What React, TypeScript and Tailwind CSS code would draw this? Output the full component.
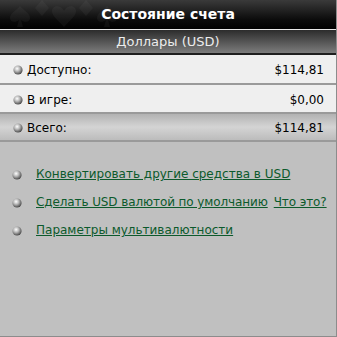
import React from 'react';

const Ball: React.FC<{ className?: string }> = ({ className = '' }) => (
  <svg width="10" height="10" viewBox="0 0 10 10" className={`shrink-0 ${className}`}>
    <defs>
      <radialGradient id="ballg" cx="40%" cy="35%" r="65%">
        <stop offset="0%" stopColor="#ffffff" />
        <stop offset="45%" stopColor="#b8b8b8" />
        <stop offset="100%" stopColor="#4a4a4a" />
      </radialGradient>
    </defs>
    <circle cx="5" cy="5" r="4.6" fill="url(#ballg)" />
  </svg>
);

// faint card-suit texture at the left of the title bar
const Suits: React.FC = () => (
  <svg width="140" height="29" viewBox="0 0 140 29" className="absolute left-0 top-0 opacity-[0.07]">
    <g fill="#9a9a9a">
      <path d="M20 6 C24 11 30 13 30 18 C30 22 25 23 21 20 L23 27 L17 27 L19 20 C15 23 10 22 10 18 C10 13 16 11 20 6Z" />
      <path d="M64 27 C58 20 52 16 52 11 C52 7 57 5 60 7 C62 8 63 9 64 11 C65 9 66 8 68 7 C71 5 76 7 76 11 C76 16 70 20 64 27Z" />
      <path d="M107 6 C111 11 117 13 117 18 C117 22 112 23 108 20 L110 27 L104 27 L106 20 C102 23 97 22 97 18 C97 13 103 11 107 6Z" />
      <path d="M42 0 L49 8 L42 16 L35 8Z" />
      <path d="M86 0 L93 8 L86 16 L79 8Z" />
    </g>
  </svg>
);

const rows = [
  { label: 'Доступно:', value: '$114,81', bg: 'bg-[#efefef]', h: 'h-[30px]' },
  { label: 'В игре:', value: '$0,00', bg: 'bg-[#efefef]', h: 'h-[29px]' },
  { label: 'Всего:', value: '$114,81', bg: 'bg-[linear-gradient(#b2b2b2,#d4d4d4_50%,#bcbcbc)]', h: 'h-[28px]' },
];

const App: React.FC = () => {
  return (
    <div className="w-[337px] h-[337px] bg-[#c0c0c0] border-r border-b border-[#8c8c8c] flex flex-col font-['DejaVu_Sans',sans-serif] text-[12px]">
      <div className="relative h-[30px] shrink-0 bg-[linear-gradient(#3a3a3a,#0a0a0a_70%,#000)] flex items-center justify-center border-b border-[#e8e8e8]">
        <Suits />
        <span className="relative text-white font-bold text-[14px]">Состояние счета</span>
      </div>
      <div className="h-[25px] shrink-0 bg-[linear-gradient(#2c2c2c,#7c7c7c)] flex items-center justify-center border-b-2 border-[#1e1e1e]">
        <span className="text-[#ececec] text-[13px]">Доллары (USD)</span>
      </div>
      {rows.map((r) => (
        <div key={r.label} className={`${r.h} ${r.bg} shrink-0 flex items-center pl-[13px] pr-[12px] pt-[2px] border-b-2 border-[#9a9a9a] text-black`}>
          <Ball className="mr-[4px]" />
          <span>{r.label}</span>
          <span className="ml-auto">{r.value}</span>
        </div>
      ))}
      <div className="flex flex-col gap-[13px] pt-[25px] pl-[12px] leading-[15px]">
        <div className="flex items-center">
          <Ball className="mr-[14px]" />
          <a href="#" className="text-[#0c5a2c] underline">Конвертировать другие средства в USD</a>
        </div>
        <div className="flex items-center">
          <Ball className="mr-[14px]" />
          <a href="#" className="text-[#0c5a2c] underline tracking-[-0.1px]">Сделать USD валютой по умолчанию</a>
          <a href="#" className="text-[#0c5a2c] underline ml-[6px] tracking-[-0.1px]">Что это?</a>
        </div>
        <div className="flex items-center">
          <Ball className="mr-[14px]" />
          <a href="#" className="text-[#0c5a2c] underline">Параметры мультивалютности</a>
        </div>
      </div>
    </div>
  );
};

export default App;
